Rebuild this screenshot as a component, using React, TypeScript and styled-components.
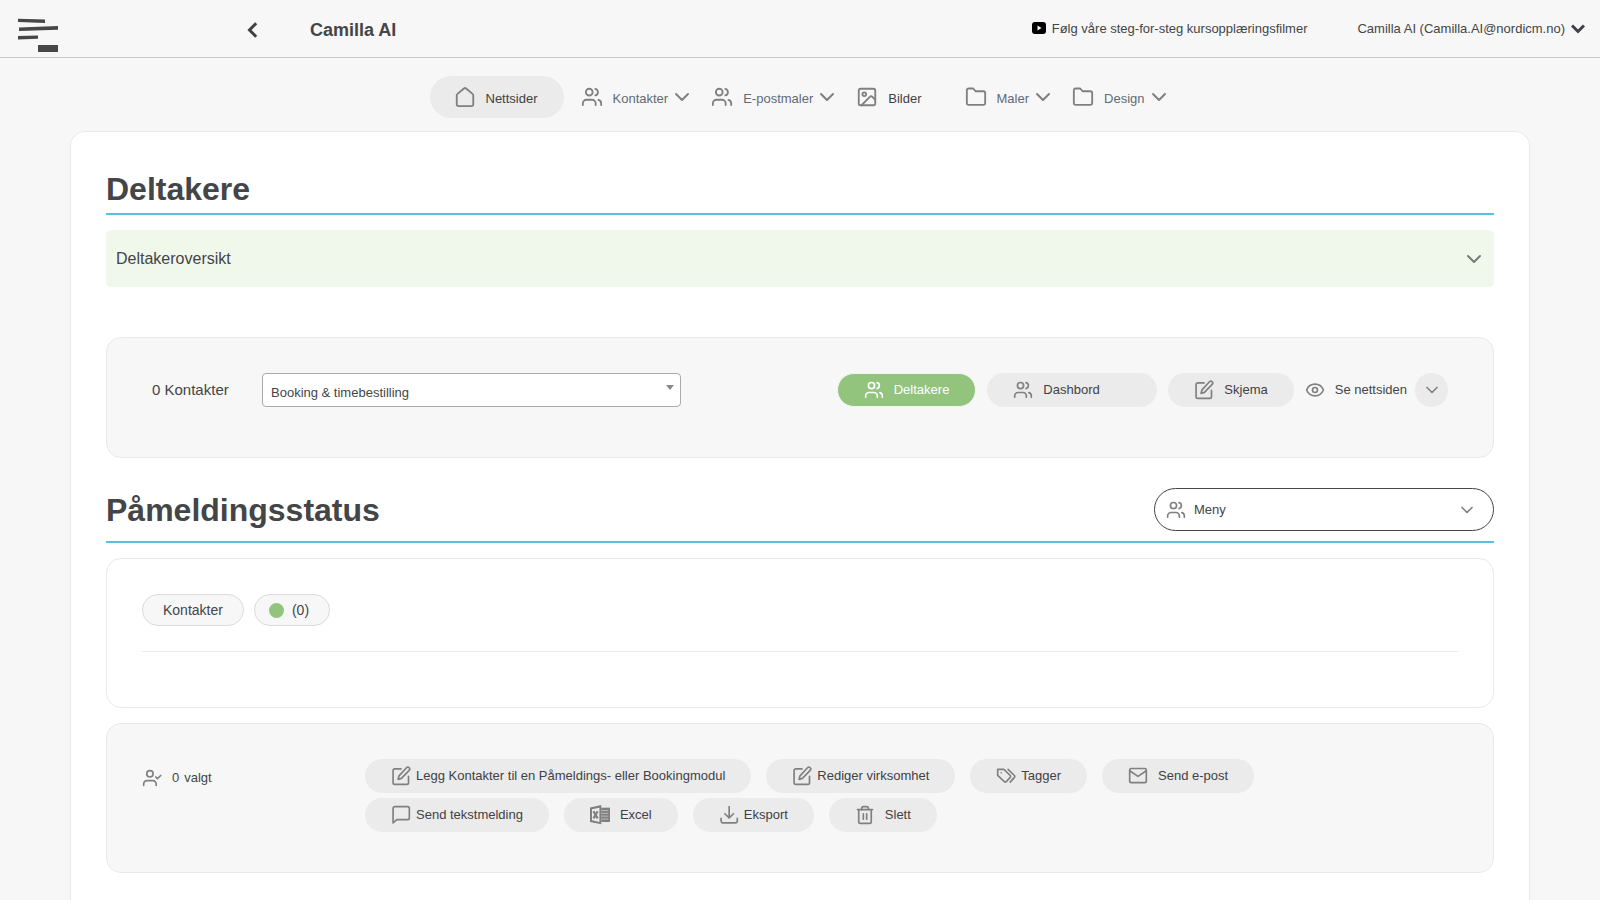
import React from "react";
import styled, { createGlobalStyle, css } from "styled-components";
import { ChevronDown, Eye, Image as ImageIcon } from "lucide-react";

const GlobalStyle = createGlobalStyle`
  *, *::before, *::after { box-sizing: border-box; }
  body {
    margin: 0;
    background: #f7f7f7;
    color: #434547;
    font-family: "Liberation Sans", Arial, sans-serif;
    font-size: 13px;
    line-height: 20px;
  }
  button, select { font: inherit; color: inherit; margin: 0; }
  button { background: none; border: 0; padding: 0; cursor: pointer; }
  a { color: inherit; text-decoration: none; }
  svg { flex: none; display: block; }
`;

/* ---------- icons ---------- */

type IconProps = { size?: number };

const Stroke = ({ size = 20, children }: IconProps & { children: React.ReactNode }) => (
  <svg
    width={size}
    height={size}
    viewBox="0 0 24 24"
    fill="none"
    stroke="currentColor"
    strokeWidth="2"
    strokeLinecap="round"
    strokeLinejoin="round"
    aria-hidden="true"
  >
    {children}
  </svg>
);

const HomeIcon = ({ size }: IconProps) => (
  <Stroke size={size}>
    <path d="M3 10.2a2 2 0 0 1 .8-1.6l7-5.900a2 2 0 0 1 2.400 0l7 5.900a2 2 0 0 1 .8 1.600V20a2 2 0 0 1-2 2H5a2 2 0 0 1-2-2z" />
  </Stroke>
);

const UsersIcon = ({ size }: IconProps) => (
  <Stroke size={size}>
    <circle cx="9" cy="6.7" r="3.7" />
    <path d="M2 20.8V19a4 4 0 0 1 4-4h6a4 4 0 0 1 4 4v1.8" />
    <path d="M15.600 3.100a3.700 3.700 0 0 1 0 7.200" />
    <path d="M19 15.200A4 4 0 0 1 22 19v1.800" />
  </Stroke>
);

const UserCheckIcon = ({ size }: IconProps) => (
  <Stroke size={size}>
    <circle cx="9.500" cy="7" r="3.800" />
    <path d="M2 21v-1.800A4 4 0 0 1 6 15.200h7a4 4 0 0 1 4 4V21" />
    <path d="m16.500 10.800 2 2L22.500 9" />
  </Stroke>
);

const FolderIcon = ({ size }: IconProps) => (
  <Stroke size={size}>
    <path d="M22 18.600a2 2 0 0 1-2 2H4a2 2 0 0 1-2-2V4.700a2 2 0 0 1 2-2h5l2.500 3H20a2 2 0 0 1 2 2z" />
  </Stroke>
);

const EditIcon = ({ size }: IconProps) => (
  <Stroke size={size}>
    <path d="M12 3.500H4.500A2 2 0 0 0 2.500 5.500v14.500a2 2 0 0 0 2 2H19a2 2 0 0 0 2-2v-7.500" />
    <path d="M18.600 2.100a2.100 2.100 0 0 1 3.200 3.200L12.500 14.800 8.500 16l1.100-4.200z" />
  </Stroke>
);

const TagsIcon = ({ size }: IconProps) => (
  <Stroke size={size}>
    <path d="M2 4h7.500l7.600 7.400a1.600 1.600 0 0 1 0 2.300l-4.800 5a1.600 1.600 0 0 1-2.300 0L2 11.200z" />
    <path d="m14.500 4 7.600 7.400a1.600 1.600 0 0 1 0 2.300L17 19.300" />
    <path d="M6.200 8.200h.01" />
  </Stroke>
);

const MailIcon = ({ size }: IconProps) => (
  <Stroke size={size}>
    <rect x="2" y="3" width="20" height="17" rx="2" />
    <path d="m2.500 6 9.500 6.500L21.500 6" />
  </Stroke>
);

const MessageIcon = ({ size }: IconProps) => (
  <Stroke size={size}>
    <path d="M22 15.500a2 2 0 0 1-2 2H7L2.500 21.500V4a2 2 0 0 1 2-2H20a2 2 0 0 1 2 2z" />
  </Stroke>
);

const DownloadIcon = ({ size }: IconProps) => (
  <Stroke size={size}>
    <path d="M2.500 16v3A2.500 2.500 0 0 0 5 21.500h14.500A2.500 2.500 0 0 0 22 19v-3" />
    <path d="M12.200 2v13.500M7 10.500l5.200 5 5.200-5" />
  </Stroke>
);

const TrashIcon = ({ size }: IconProps) => (
  <Stroke size={size}>
    <path d="M3 5.500h18M4.500 5.500V20a2 2 0 0 0 2 2h11a2 2 0 0 0 2-2V5.500" />
    <path d="M8 5.500V4a2 2 0 0 1 2-2h4a2 2 0 0 1 2 2v1.500M10 10.500v6.500M14 10.500v6.500" />
  </Stroke>
);

const ExcelIcon = ({ size = 20 }: IconProps) => (
  <svg width={size} height={size} viewBox="0 0 24 24" aria-hidden="true">
    <path fill="currentColor" fillRule="evenodd" d="M0 3 13.500 0v23.200L0 20.400zM2.400 5v13.400l8.900 1.900V3.200z" />
    <path fill="currentColor" d="M13.500 3.200H24v17.200H13.500z" />
    <path stroke="#c4c4c4" strokeWidth="1" fill="none" d="M14 6.600H22M14 10H22M14 13.400H22M14 16.800H22" />
    <path stroke="currentColor" strokeWidth="2.600" fill="none" d="m4.200 7.500 5 8.500M9.200 7.500 4.200 16" />
  </svg>
);

const YoutubeIcon = () => (
  <svg width="14" height="14" viewBox="0 0 14 14" aria-hidden="true">
    <rect width="14" height="12" rx="3" fill="#000" />
    <path d="M5.500 3.500v5L9.500 6z" fill="#fff" />
  </svg>
);

const LogoMark = () => (
  <svg width="40" height="34" viewBox="0 0 40 34" role="img" aria-label="Logo">
    <g fill="#464748">
      <path d="M0 .8 27 1.500V5L0 4z" />
      <path d="M1 9.500 40 8v3.800L1 13z" />
      <path d="M0 18 20 17.500v3.300L0 21.500z" />
      <path d="M20 27h20v7H20z" />
    </g>
  </svg>
);

const BackChevron = () => (
  <svg width="12" height="16" viewBox="0 0 12 16" fill="none" stroke="#3f4144" strokeWidth="3" aria-hidden="true">
    <path d="M9.200 1.200 2.500 8l6.700 6.800" />
  </svg>
);

const AccountChevron = () => (
  <svg width="14" height="10" viewBox="0 0 14 10" fill="none" stroke="#3f4144" strokeWidth="3" aria-hidden="true">
    <path d="M1 1.500 7 7.500l6-6" />
  </svg>
);

/* ---------- header ---------- */

const Page = styled.div`
  display: flex;
  flex-direction: column;
  min-height: 100vh;
`;

const Header = styled.header`
  display: flex;
  align-items: center;
  height: 58px;
  padding: 0 15px 0 18px;
  border-bottom: 1px solid #cbcbcb;
`;

const LogoLink = styled.a`
  width: 228px;
  padding-top: 12px;
`;

const BackButton = styled.button`
  width: 64px;
  padding: 2px 1px 0;
`;

const AccountName = styled.strong`
  font-size: 18px;
  padding-top: 3px;
`;

const HeaderLinks = styled.div`
  display: flex;
  align-items: center;
  gap: 50px;
  margin-left: auto;
`;

const headerItem = css`
  display: flex;
  align-items: center;
  gap: 6px;
`;

const FilmLink = styled.a`
  ${headerItem}
`;

const AccountButton = styled.button`
  ${headerItem}
`;

/* ---------- navigation ---------- */

const Nav = styled.nav`
  display: flex;
  justify-content: center;
  align-items: center;
  gap: 17px;
  padding: 18px 0 13px;
`;

const NavItem = styled.a<{ $active?: boolean; $plain?: boolean }>`
  display: flex;
  align-items: center;
  height: 42px;
  padding: 0 ${(p) => (p.$active ? 24 : 0)}px;
  border-radius: 21px;
  background: ${(p) => (p.$active ? "#ebebeb" : "transparent")};
  color: ${(p) => (p.$active || p.$plain ? "#3f4144" : "#626a75")};
  margin-right: ${(p) => (p.$plain ? 24 : 0)}px;

  svg { color: #808080; }
`;

const NavLabel = styled.span`
  padding: 3px 2px 0 10px;
`;

/* ---------- content ---------- */

const Sheet = styled.main`
  flex: 1;
  margin: 0 70px;
  padding: 35px 35px 26px;
  background: #fff;
  border: 1px solid #e8e9ec;
  border-bottom: 0;
  border-radius: 15px 15px 0 0;
`;

const SectionHead = styled.div<{ $tall?: boolean }>`
  display: flex;
  align-items: center;
  justify-content: space-between;
  padding-bottom: ${(p) => (p.$tall ? 10 : 3)}px;
  margin-bottom: 15px;
  border-bottom: 2px solid #5bc0de;
`;

const Heading = styled.h1`
  margin: 0;
  padding-top: 2px;
  font-size: 32px;
  line-height: 41px;
`;

const Accordion = styled.button`
  display: flex;
  align-items: center;
  justify-content: space-between;
  width: 100%;
  height: 57px;
  padding: 0 8px 0 10px;
  margin-bottom: 50px;
  border-radius: 5px;
  background: #f0f8ec;
  font-size: 16px;

  svg { color: #777b78; }
`;

const Panel = styled.section<{ $muted?: boolean }>`
  padding: 35px;
  border: 1px solid #e8e9ec;
  border-radius: 15px;
  background: ${(p) => (p.$muted ? "#f7f7f7" : "#fff")};
`;

const FilterPanel = styled(Panel)`
  display: flex;
  align-items: center;
  min-height: 121px;
  padding: 35px 45px 50px;
  margin-bottom: 30px;
`;

const ContactCount = styled.label`
  width: 110px;
  font-size: 15px;
`;

const SelectWrap = styled.div`
  position: relative;
  width: 419px;
  margin-right: auto;
`;

const ModuleSelect = styled.select`
  appearance: none;
  display: block;
  width: 100%;
  height: 34px;
  padding: 5px 24px 0 8px;
  border: 1px solid #aaa;
  border-radius: 4px;
  background: #fff;
`;

const SelectCaret = styled.svg`
  position: absolute;
  top: 12px;
  right: 7px;
  pointer-events: none;
`;

const Pill = styled.button<{ $primary?: boolean; $tight?: boolean; $wide?: boolean }>`
  display: flex;
  align-items: center;
  gap: ${(p) => (p.$tight ? 5 : 10)}px;
  height: 34px;
  min-width: ${(p) => (p.$wide ? 170 : 0)}px;
  padding: 0 26px;
  border-radius: 17px;
  border: ${(p) => (p.$primary ? "1px solid #f2f6f0" : "0")};
  background: ${(p) => (p.$primary ? "#93c47d" : "#ebebeb")};
  color: ${(p) => (p.$primary ? "#fff" : "#3f4144")};
  white-space: nowrap;

  svg { color: ${(p) => (p.$primary ? "#fff" : "#808080")}; }
`;

const PillRow = styled.div`
  display: flex;
  align-items: center;
  gap: 11px;
`;

const SiteLink = styled.a`
  display: flex;
  align-items: center;
  gap: 10px;

  svg { color: #808080; }
`;

const SiteGroup = styled.div`
  display: flex;
  align-items: center;
  gap: 8px;
`;

const RoundButton = styled.button`
  display: grid;
  place-items: center;
  width: 33px;
  height: 34px;
  border-radius: 17px;
  background: #ebebeb;
  color: #808080;
`;

const MenuButton = styled.button`
  display: flex;
  align-items: center;
  gap: 8px;
  width: 340px;
  height: 43px;
  padding: 0 16px 0 11px;
  border: 1px solid #434547;
  border-radius: 22px;
  background: #fff;

  svg { color: #808080; }
  svg:last-child { margin-left: auto; }
`;

const StatusPanel = styled(Panel)`
  min-height: 150px;
  margin-bottom: 15px;
`;

const ChipRow = styled.div`
  display: flex;
  gap: 10px;
  padding-bottom: 25px;
  border-bottom: 1px solid #ebebeb;
`;

const Chip = styled.button<{ $status?: boolean }>`
  display: flex;
  align-items: center;
  gap: 8px;
  height: 32px;
  padding: 0 ${(p) => (p.$status ? "20px 0 14px" : "20px")};
  border: 1px solid #dcdcdc;
  border-radius: 16px;
  background: #f7f7f7;
  font-size: 14px;
`;

const Dot = styled.span`
  width: 15px;
  height: 15px;
  border-radius: 50%;
  background: #93c47d;
`;

const ActionPanel = styled(Panel)`
  display: flex;
  align-items: flex-start;
  min-height: 150px;
`;

const Selected = styled.div`
  display: flex;
  align-items: center;
  gap: 10px;
  width: 223px;
  padding-top: 9px;

  svg { color: #808080; }
`;

const SelectedCount = styled.span`
  display: flex;
  gap: 5px;
`;

const Actions = styled.div`
  display: flex;
  flex: 1;
  flex-wrap: wrap;
  gap: 5px 15px;
  max-width: 1000px;
`;

type IconType = (props: IconProps) => React.ReactElement;

const navItems: { label: string; icon: React.ReactNode; active?: boolean; plain?: boolean }[] = [
  { label: "Nettsider", icon: <HomeIcon size={22} />, active: true },
  { label: "Kontakter", icon: <UsersIcon size={22} /> },
  { label: "E-postmaler", icon: <UsersIcon size={22} /> },
  { label: "Bilder", icon: <ImageIcon size={22} />, plain: true },
  { label: "Maler", icon: <FolderIcon size={22} /> },
  { label: "Design", icon: <FolderIcon size={22} /> },
];

const actions: { label: string; icon: IconType; tight?: boolean }[] = [
  { label: "Legg Kontakter til en Påmeldings- eller Bookingmodul", icon: EditIcon, tight: true },
  { label: "Rediger virksomhet", icon: EditIcon, tight: true },
  { label: "Tagger", icon: TagsIcon, tight: true },
  { label: "Send e-post", icon: MailIcon },
  { label: "Send tekstmelding", icon: MessageIcon, tight: true },
  { label: "Excel", icon: ExcelIcon },
  { label: "Eksport", icon: DownloadIcon, tight: true },
  { label: "Slett", icon: TrashIcon },
];

export default function App() {
  return (
    <Page>
      <GlobalStyle />
      <Header>
        <LogoLink href="#">
          <LogoMark />
        </LogoLink>
        <BackButton type="button" aria-label="Tilbake">
          <BackChevron />
        </BackButton>
        <AccountName>Camilla AI</AccountName>
        <HeaderLinks>
          <FilmLink href="#">
            <YoutubeIcon />
            Følg våre steg-for-steg kursopplæringsfilmer
          </FilmLink>
          <AccountButton type="button">
            Camilla AI (Camilla.AI@nordicm.no)
            <AccountChevron />
          </AccountButton>
        </HeaderLinks>
      </Header>

      <Nav>
        {navItems.map((item) => (
          <NavItem key={item.label} href="#" $active={item.active} $plain={item.plain}>
            {item.icon}
            <NavLabel>{item.label}</NavLabel>
            {!item.active && !item.plain && <ChevronDown size={24} />}
          </NavItem>
        ))}
      </Nav>

      <Sheet>
        <SectionHead>
          <Heading>Deltakere</Heading>
        </SectionHead>
        <Accordion type="button">
          Deltakeroversikt
          <ChevronDown size={24} />
        </Accordion>

        <FilterPanel $muted>
          <ContactCount htmlFor="module">0 Kontakter</ContactCount>
          <SelectWrap>
            <ModuleSelect id="module">
              <option>Booking &amp; timebestilling</option>
            </ModuleSelect>
            <SelectCaret width="8" height="5" viewBox="0 0 8 5" aria-hidden="true">
              <path d="M0 0h8L4 5z" fill="#888" />
            </SelectCaret>
          </SelectWrap>
          <PillRow>
            <Pill type="button" $primary>
              <UsersIcon />
              Deltakere
            </Pill>
            <Pill type="button" $wide>
              <UsersIcon />
              Dashbord
            </Pill>
            <Pill type="button">
              <EditIcon />
              Skjema
            </Pill>
            <SiteGroup>
              <SiteLink href="#">
                <Eye size={20} />
                Se nettsiden
              </SiteLink>
              <RoundButton type="button" aria-label="Flere valg">
                <ChevronDown size={20} />
              </RoundButton>
            </SiteGroup>
          </PillRow>
        </FilterPanel>

        <SectionHead $tall>
          <Heading as="h2">Påmeldingsstatus</Heading>
          <MenuButton type="button">
            <UsersIcon />
            Meny
            <ChevronDown size={20} />
          </MenuButton>
        </SectionHead>

        <StatusPanel>
          <ChipRow>
            <Chip type="button">Kontakter</Chip>
            <Chip type="button" $status>
              <Dot />
              (0)
            </Chip>
          </ChipRow>
        </StatusPanel>

        <ActionPanel $muted>
          <Selected>
            <UserCheckIcon />
            <SelectedCount>
              <span>0</span>
              <span>valgt</span>
            </SelectedCount>
          </Selected>
          <Actions>
            {actions.map(({ label, icon: Icon, tight }) => (
              <Pill key={label} type="button" $tight={tight}>
                <Icon />
                {label}
              </Pill>
            ))}
          </Actions>
        </ActionPanel>
      </Sheet>
    </Page>
  );
}
